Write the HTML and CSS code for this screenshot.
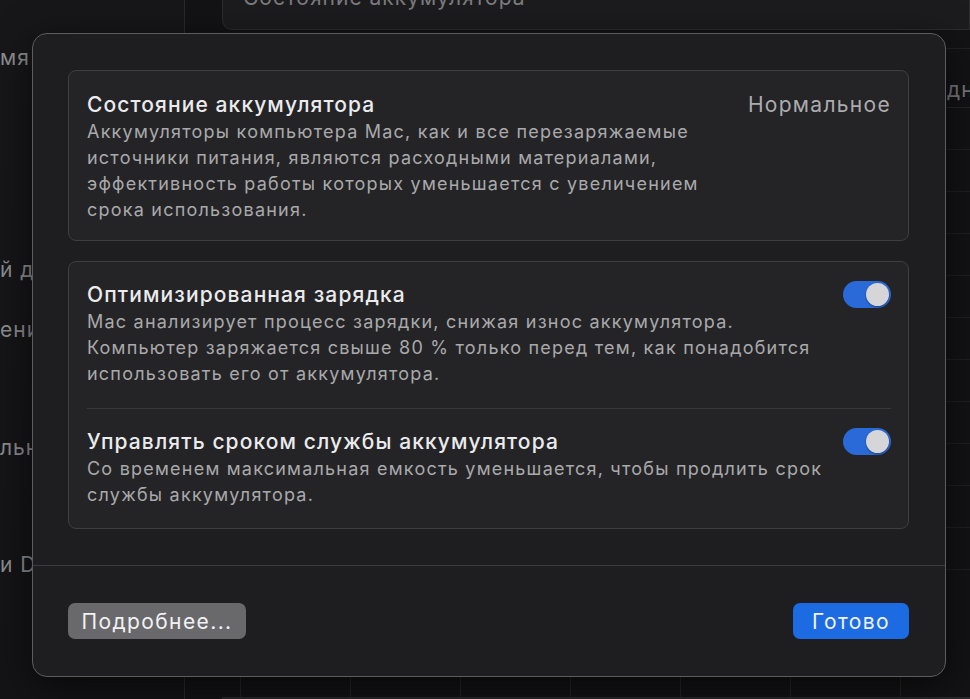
FILE: index.html
```html
<!DOCTYPE html>
<html lang="ru">
<head>
    <meta charset="UTF-8">
    <meta name="viewport" content="width=device-width, initial-scale=1.0">
    <title>Аккумулятор</title>
    <link rel="stylesheet" href="styles.css">
</head>
<body>
    <div class="window">
        <aside class="sidebar">
            <div class="side-item s1">ние</div>
            <div class="side-item s2">мя экрана</div>
            <div class="side-item s3">й дисплей</div>
            <div class="side-item s4">ения</div>
            <div class="side-item s5">льный</div>
            <div class="side-item s6">и Dock</div>
        </aside>
        <main class="main">
            <div class="top-card">Состояние аккумулятора</div>
            <div class="table">
                <div class="table-head">дни</div>
                <div class="table-row"></div>
                <div class="table-row"></div>
                <div class="table-row"></div>
                <div class="table-row"></div>
                <div class="table-row"></div>
                <div class="table-row"></div>
                <div class="table-row"></div>
                <div class="table-row"></div>
                <div class="table-row"></div>
                <div class="table-row"></div>
                <div class="table-row"></div>
            </div>
            <div class="chart">
                <div class="col"></div><div class="col"></div><div class="col"></div>
                <div class="col"></div><div class="col"></div><div class="col"></div>
                <div class="col"></div>
            </div>
        </main>
    </div>

    <div class="modal">
        <div class="modal-body">
            <section class="group">
                <div class="row first">
                    <div class="row-head">
                        <span class="title">Состояние аккумулятора</span>
                        <span class="value">Нормальное</span>
                    </div>
                    <p class="desc">Аккумуляторы компьютера Mac, как и все перезаряжаемые<br>источники питания, являются расходными материалами,<br>эффективность работы которых уменьшается с увеличением<br>срока использования.</p>
                </div>
            </section>

            <section class="group">
                <div class="row">
                    <div class="row-head">
                        <span class="title">Оптимизированная зарядка</span>
                        <span class="toggle on"><span class="knob"></span></span>
                    </div>
                    <p class="desc">Mac анализирует процесс зарядки, снижая износ аккумулятора.<br>Компьютер заряжается свыше 80&nbsp;% только перед тем, как понадобится<br>использовать его от аккумулятора.</p>
                </div>
                <div class="row divided">
                    <div class="row-head">
                        <span class="title">Управлять сроком службы аккумулятора</span>
                        <span class="toggle on"><span class="knob"></span></span>
                    </div>
                    <p class="desc">Со временем максимальная емкость уменьшается, чтобы продлить срок<br>службы аккумулятора.</p>
                </div>
            </section>
        </div>

        <footer class="modal-foot">
            <button class="btn btn-gray">Подробнее...</button>
            <button class="btn btn-blue">Готово</button>
        </footer>
    </div>
</body>
</html>
```

FILE: styles.css
```css
*{
    box-sizing: border-box;
}
body{
    margin: 0;
    width: 970px;
    height: 699px;
    overflow: hidden;
    background: #131315;
    font-family: Inter, "Noto Sans", sans-serif;
    position: relative;
}

/* background window */
.window{
    display: flex;
    height: 699px;
}
.sidebar{
    width: 185px;
    flex-shrink: 0;
    display: flex;
    flex-direction: column;
    background: linear-gradient(#171719, #141416);
    border-right: 1px solid #2a2a2c;
    overflow: hidden;
    white-space: nowrap;
    color: #8e8e90;
    font-size: 21px;
    letter-spacing: 1px;
}
.side-item{
    height: 40px;
    line-height: 40px;
    flex-shrink: 0;
}
.s1{ margin-top: -32px; margin-bottom: 30px; }
.s2{ margin-bottom: 18px; }
.s3{ margin-top: 154px; margin-bottom: 20px; }
.s4{ margin-bottom: 18px; }
.s5{ margin-top: 60px; margin-bottom: 17px; }
.s6{ margin-top: 60px; }

.main{
    flex: 1;
    padding-left: 37px;
    display: flex;
    flex-direction: column;
    overflow: hidden;
}
.top-card{
    height: 44px;
    margin-top: -14px;
    padding: 0 20px;
    line-height: 24px;
    color: #7c7c7e;
    font-size: 21px;
    letter-spacing: 1px;
    background: #1c1c1e;
    border: 1px solid #2c2c2e;
    border-top: none;
    border-radius: 0 0 0 10px;
    white-space: nowrap;
    flex-shrink: 0;
}
.table{
    margin-top: 18px;
    display: flex;
    flex-direction: column;
    flex-shrink: 0;
}
.table-head{
    height: 60px;
    padding: 28px 0 0 725px;
    color: #7a7a7c;
    font-size: 21px;
    letter-spacing: 1px;
    white-space: nowrap;
    border-top: 1px solid #222224;
    border-bottom: 1px solid #262628;
}
.table-row{
    height: 42px;
    border-bottom: 1px solid #202022;
}
.chart{
    flex: 1;
    display: flex;
    padding-left: 18px;
    border-bottom: 2px solid #2a2a2c;
}
.col{
    width: 110px;
    flex-shrink: 0;
    border-left: 1px solid #242426;
}

/* dialog over the window */
.modal{
    position: absolute;
    left: 32px;
    top: 33px;
    width: 914px;
    height: 644px;
    background: #1e1e20;
    border: 1px solid #5c5c5e;
    border-radius: 15px;
    box-shadow: 0 10px 40px rgba(0, 0, 0, 0.6);
    display: flex;
    flex-direction: column;
}
.modal-body{
    padding: 36px 36px 0 35px;
    display: flex;
    flex-direction: column;
    gap: 20px;
    height: 532px;
    border-bottom: 1px solid #3c3c3e;
}
.group{
    background: #242426;
    border: 1px solid #3e3e40;
    border-radius: 8px;
}
.row{
    margin: 0 17px 0 18px;
    padding: 18px 0 21px;
}
.row.first{
    padding: 19px 0 17px;
}
.row.divided{
    border-top: 1px solid #38383a;
    padding: 18px 0 20px;
}
.row-head{
    display: flex;
    justify-content: space-between;
    align-items: center;
    height: 28px;
}
.title{
    color: #ebebed;
    font-size: 21px;
    font-weight: 500;
    letter-spacing: 1.1px;
}
.value{
    color: #acacae;
    font-size: 21px;
    letter-spacing: 1.3px;
}
.desc{
    margin: 1px 0 0;
    color: #a9a9ab;
    font-size: 18px;
    letter-spacing: 1.22px;
    line-height: 26px;
    white-space: nowrap;
}
.toggle{
    width: 48px;
    height: 27px;
    border-radius: 14px;
    background: #2a6ad8;
    display: flex;
    align-items: center;
    padding: 2px;
}
.toggle.on{
    justify-content: flex-end;
}
.knob{
    width: 23px;
    height: 23px;
    border-radius: 50%;
    background: #d6d6d8;
    box-shadow: 0 1px 2px rgba(0, 0, 0, 0.4);
}
.modal-foot{
    flex: 1;
    display: flex;
    justify-content: space-between;
    align-items: flex-start;
    padding: 37px 36px 0 35px;
}
.btn{
    height: 36px;
    border: none;
    border-radius: 7px;
    font-family: Inter, "Noto Sans", sans-serif;
    font-size: 21px;
    letter-spacing: 1.4px;
    color: #f2f2f4;
    padding: 0;
}
.btn-gray{
    width: 178px;
    background: #69696b;
}
.btn-blue{
    width: 116px;
    background: #1c6be3;
}
```
